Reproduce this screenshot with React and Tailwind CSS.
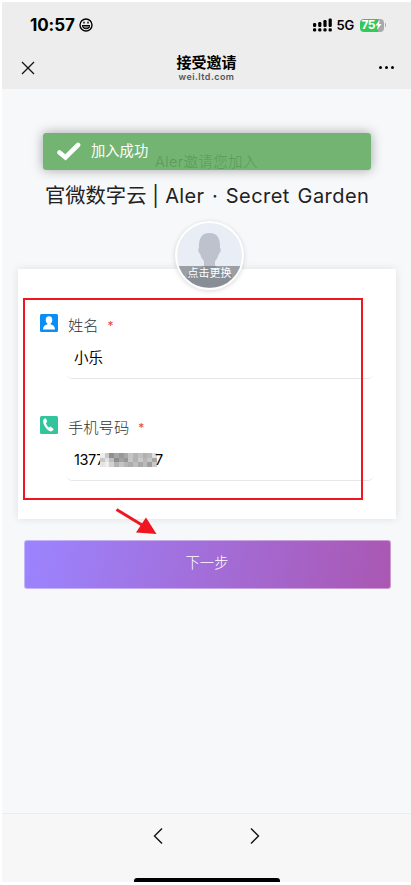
const mosaicRows = [
  ["#eeeeee", "#c9c9c9", "#8f8f8f", "#a6a6a6", "#989898", "#a9a9a9", "#c4c4c4", "#b4b4b4", "#c0c0c0", "#b0b0b0", "#b9b9b9", "#e0e0e0"],
  ["#c8c8c8", "#e2e2e2", "#bdbdbd", "#8d8d8d", "#a2a2a2", "#969696", "#c6c6c6", "#b2b2b2", "#cacaca", "#b6b6b6", "#c5c5c5", "#a6a6a6"],
  ["#e4e4e4", "#efefef", "#d2d2d2", "#b2b2b2", "#c4c4c4", "#b5b5b5", "#adadad", "#bdbdbd", "#a9a9a9", "#bababa", "#9e9e9e", "#c9c9c9"],
]

function StatusBar() {
  return (
    <div className="flex h-[46px] items-center pl-7 pr-[25px]">
      <span className="w-[46px] text-[17px] font-bold leading-none tracking-[-0.1px] text-black">
        10:57
      </span>
      <svg className="ml-[3px] h-[14px] w-[14px]" viewBox="0 0 14 14" fill="none" stroke="#000" strokeWidth="1.4">
        <circle cx="7" cy="7" r="6" />
        <path d="M3.5 7.5h7c0 4.3-7 4.3-7 0ZM4 9h6" strokeWidth="1.1" />
        <path d="M5 3.8v1.7M9 3.8v1.7" />
      </svg>
      <div className="ml-auto flex items-center">
        <svg className="h-[14px] w-[19px]" viewBox="0 0 19 14" fill="#000">
          <rect x="0" y="5" width="3.2" height="4" rx="1.2" />
          <rect x="5.2" y="4" width="3.2" height="5" rx="1.2" />
          <rect x="10.4" y="2" width="3.2" height="7" rx="1.2" />
          <rect x="15.6" y="0.5" width="3.2" height="8.5" rx="1.2" />
          <rect x="0" y="10.2" width="3.2" height="3.2" rx="1.2" />
          <rect x="5.2" y="10.2" width="3.2" height="3.2" rx="1.2" />
          <rect x="10.4" y="10.2" width="3.2" height="3.2" rx="1.2" />
          <rect x="15.6" y="10.2" width="3.2" height="3.2" rx="1.2" />
        </svg>
        <span className="ml-[5px] w-[18px] whitespace-nowrap text-[13px] font-semibold leading-none tracking-[-0.3px]">5G</span>
        <div className="ml-[5px] flex h-[13px] w-[24px] items-center overflow-hidden rounded-[4px] bg-[linear-gradient(90deg,#34c759_75%,#a9a9a9_75%)] pl-[2px] text-[12px] font-bold leading-none tracking-[-0.5px] text-white">
          75
          <svg className="h-[10px] w-[7px] shrink-0" viewBox="0 0 7 10" fill="#fff">
            <path d="M4.7 0 .3 5.6h2.5L1.9 10l4.6-5.9H4Z" />
          </svg>
        </div>
        <span className="ml-px h-1 w-[1.5px] rounded-r bg-[#a9a9a9]" />
      </div>
    </div>
  )
}

function NavBar() {
  return (
    <div className="grid h-[41px] grid-cols-[60px_1fr_60px] items-center">
      <svg className="mb-[2px] ml-[19px] h-[14px] w-[14px]" viewBox="0 0 14 14" stroke="#111" strokeWidth="1.3">
        <path d="m1 1 12 12M13 1 1 13" />
      </svg>
      <div className="-mt-[3px] flex flex-col items-center">
        <h1 className="text-[15px] font-bold leading-[19px] text-black">接受邀请</h1>
        <p className="text-[9px] font-semibold leading-[10px] tracking-[0.45px] text-[#555]">wei.ltd.com</p>
      </div>
      <div className="mb-[2px] flex gap-[3px] pl-[28px]">
        <i className="h-[3px] w-[3px] rounded-full bg-black" />
        <i className="h-[3px] w-[3px] rounded-full bg-black" />
        <i className="h-[3px] w-[3px] rounded-full bg-black" />
      </div>
    </div>
  )
}

function Toast() {
  return (
    <div className="absolute left-[41px] top-[44px] flex h-[37px] w-[328px] items-center rounded-[3px] bg-[#51a351]/80 pl-[13px] shadow-[0_0_12px_rgba(0,0,0,0.35)]">
      <svg className="h-[19px] w-[25px]" viewBox="0 0 25 19" fill="none" stroke="#fff" strokeWidth="4.6" strokeLinecap="round">
        <path d="m3.5 10.5 6 5L22 3" />
      </svg>
      <span className="ml-[10px] text-[14.3px] leading-none text-white">加入成功</span>
    </div>
  )
}

function Avatar() {
  return (
    <div className="relative z-10 -mb-[21px] ml-[173px] mt-[11px] h-[69px] w-[69px] overflow-hidden rounded-full border-2 border-white bg-[#e9edf5] shadow-[0_1px_5px_rgba(0,0,0,0.16)]">
      <svg className="h-full w-full" viewBox="0 0 65 65" fill="#bdc2cc">
        <path d="M32.5 10c-7.5 0-11 5-10.5 15-1.5 1-.5 5 1.2 6 .8 4 2.8 5.5 3.8 7.5v4c-2 4-12 4.5-17 9.5v12h45V52c-5-5-15-5.5-17-9.5v-4c1-2 3-3.5 3.8-7.5 1.7-1 2.7-5 1.2-6 .5-10-3-15-10.5-15Z" />
      </svg>
      <span className="absolute inset-x-0 bottom-0 h-[22px] bg-[#666970]/60 text-center text-[11px] leading-[15px] text-white">
        点击更换
      </span>
    </div>
  )
}

function Field({ icon, label, children }) {
  return (
    <div className="grid grid-cols-[28px_1fr]">
      {icon}
      <label className="flex h-[24px] items-center text-[15.3px] font-light text-[#333]">
        {label}
        <span className="ml-[9px] text-[12px] font-normal leading-none text-[#e64340]">*</span>
      </label>
      <div className="col-start-2 -ml-px flex h-[41px] items-center rounded-[5px] border-b border-[#e6e7e8] pl-[7px] text-[14.5px] text-black">
        {children}
      </div>
    </div>
  )
}

const nameIcon = (
  <svg className="h-[18px] w-[18px]" viewBox="0 0 18 18">
    <rect width="18" height="18" rx="1.5" fill="#098df6" />
    <ellipse cx="9" cy="6" rx="3.3" ry="3.8" fill="#fff" />
    <path d="M3 15.5c0-3 1.7-4.5 4.3-5V9h3.4v1.5c2.6.5 4.3 2 4.3 5Z" fill="#fff" />
  </svg>
)

const phoneIcon = (
  <svg className="h-[18px] w-[18px]" viewBox="0 0 18 18">
    <rect width="18" height="18" rx="1.5" fill="#32c49a" />
    <path d="M3.3 4.1c.5-1.2 1.5-1.9 2.6-1.9l1.4 3.5-1.4 1.2c.5 1.8 1.5 3.4 2.8 4.5l1.7-.9 3.3 2.5c-.5 1.3-1.6 2.4-2.9 2.6C7.2 15.2 2.2 8 3.3 4.1Z" fill="#fff" />
  </svg>
)

// Pixelated middle digits of the phone number
function MaskedDigits() {
  return (
    <span className="-ml-[4px] grid w-[57px] grid-cols-12">
      {mosaicRows.map((row, y) =>
        row.map((color, x) => (
          <i key={`${y}-${x}`} className="h-[4.4px]" style={{ backgroundColor: color }} />
        ))
      )}
    </span>
  )
}

function Annotations() {
  return (
    <>
      <div className="absolute left-[21px] top-[209px] h-[202px] w-[340px] border-2 border-[#ee1620]" />
      <svg className="absolute left-[113px] top-[418px] h-[30px] w-[44px]" viewBox="0 0 44 30">
        <path d="M1.5 2.5 27 18" stroke="#ee1620" strokeWidth="3" />
        <path d="M31 10.5 41.5 27 21 25.5Z" fill="#ee1620" />
      </svg>
    </>
  )
}

export default function App() {
  return (
    <div className="h-[885px] w-[411px] overflow-hidden bg-white pl-[2px] pt-[2px] font-[Inter,'Noto_Sans_CJK_SC',sans-serif]">
      <div className="flex h-[880px] flex-col">
        <header className="h-[87px] shrink-0 bg-[#ededed]">
          <StatusBar />
          <NavBar />
        </header>

        <main className="relative flex-1 bg-[#f7f8fa] pt-[62px]">
          <p className="text-center text-[14.5px] font-light leading-[22px] tracking-[0.4px] text-[#777]">Aler邀请您加入</p>
          <h2 className="mt-[9px] whitespace-nowrap pl-[43px] text-[20.3px] leading-[27px] text-[#222]">
            官微数字云
            <span className="text-[20px] tracking-[0.3px]"> | Aler</span>
            <span className="text-[20px] tracking-[0.45px] [word-spacing:1.6px]"> · Secret Garden</span>
          </h2>
          <Avatar />

          <section className="ml-[16px] h-[250px] w-[378px] bg-white pl-[22px] pr-[23px] pt-[45px] shadow-[0_0_8px_rgba(0,0,0,0.1)]">
            <Field icon={nameIcon} label="姓名">
              小乐
            </Field>
            <div className="h-[37px]" />
            <Field icon={phoneIcon} label="手机号码">
              <span className="tracking-[-0.4px]">1377</span>
              <MaskedDigits />
              <span className="-ml-[2px]">7</span>
            </Field>
          </section>

          <button className="ml-[21.5px] mt-[21px] h-[49px] w-[367px] rounded-[3px] border border-white/40 bg-[linear-gradient(100deg,#9b84ff,#aa57b2)] bg-origin-border pb-[4px] text-[14.3px] font-light text-white">
            下一步
          </button>

          <Toast />
          <Annotations />
        </main>

        <footer className="flex h-[69px] shrink-0 flex-col items-center border-t border-[#ececec] bg-[#f7f7f7]">
          <div className="mt-[13px] flex gap-[87px]">
            <svg className="h-[18px] w-[10px]" viewBox="0 0 10 18" fill="none" stroke="#111" strokeWidth="1.4">
              <path d="M9 1.5 1.5 9 9 16.5" />
            </svg>
            <svg className="h-[18px] w-[10px]" viewBox="0 0 10 18" fill="none" stroke="#111" strokeWidth="1.4">
              <path d="M1 1.5 8.5 9 1 16.5" />
            </svg>
          </div>
          <div className="mt-auto h-1 w-[146px] rounded-t-[3px] bg-black" />
        </footer>
      </div>
    </div>
  )
}
